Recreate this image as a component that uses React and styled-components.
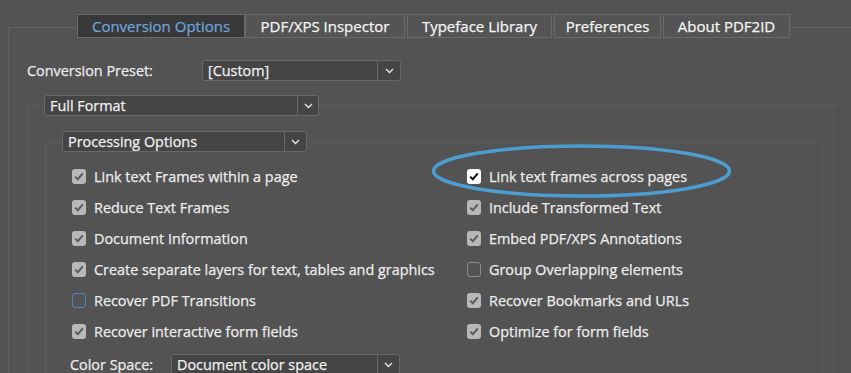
import React from 'react';
import styled, { createGlobalStyle } from 'styled-components';

const Global = createGlobalStyle`
  html, body { margin: 0; padding: 0; background: #535353; overflow: hidden; }
  body { font-family: "Open Sans", "Liberation Sans", sans-serif; color: #ededed; }
  * { box-sizing: border-box; }
`;

const Page = styled.div`
  width: 851px;
  height: 373px;
  padding-top: 27px;
  overflow: hidden;
`;

const Panel = styled.div`
  margin-left: 8px;
  width: 900px;
  min-height: 400px;
  border-top: 1px solid #616161;
  border-left: 1px solid #616161;
  padding-left: 18px;
`;

const TabBar = styled.div`
  display: flex;
  gap: 2px;
  margin-top: -14px;
  margin-left: 50px;
`;

const Tab = styled.div`
  width: ${p => p.$w}px;
  height: 24px;
  margin-right: ${p => (p.$tight ? -2 : 0)}px;
  display: flex;
  align-items: center;
  justify-content: center;
  border: 1px solid #6a6a6a;
  background: ${p => (p.$active ? '#383838' : '#545454')};
  color: ${p => (p.$active ? '#6fa3da' : '#f4f4f4')};
  font-size: 15px;
  -webkit-text-stroke: 0.25px currentColor;
  white-space: nowrap;
`;

const Row = styled.div`
  display: flex;
  align-items: center;
  margin-top: ${p => p.$mt || 0}px;
  margin-left: ${p => p.$ml || 0}px;
`;

const Label = styled.div`
  width: ${p => p.$w}px;
  font-size: 14.4px;
  -webkit-text-stroke: 0.25px currentColor;
  white-space: nowrap;
`;

const SelectBox = styled.div`
  width: ${p => p.$w}px;
  height: 21px;
  display: flex;
  align-items: stretch;
  border: 1px solid #686868;
  border-radius: 3px;
  background: #454545;
  margin-top: ${p => p.$mt || 0}px;
  margin-left: ${p => p.$ml || 0}px;
  font-size: 14.4px;
  -webkit-text-stroke: 0.25px currentColor;
  color: #f0f0f0;
  flex-shrink: 0;
`;

const SelectText = styled.div`
  flex: 1;
  display: flex;
  align-items: center;
  padding-left: 5px;
  white-space: nowrap;
  overflow: hidden;
`;

const SelectArrow = styled.div`
  width: ${p => p.$aw}px;
  border-left: 1px solid #686868;
  display: flex;
  align-items: center;
  justify-content: center;
`;

const Group = styled.div`
  border: 1px solid #5d5d5d;
  border-right-color: #4d4d4d;
  margin-top: ${p => p.$mt}px;
  margin-left: ${p => p.$ml}px;
  width: ${p => p.$w}px;
  min-height: 300px;
`;

const CheckGrid = styled.div`
  display: grid;
  grid-template-columns: 395px 1fr;
  grid-auto-rows: 31px;
  margin-top: 9px;
  margin-left: 26px;
`;

const CheckItem = styled.div`
  position: relative;
  display: flex;
  align-items: center;
  gap: 8px;
  font-size: 14.4px;
  -webkit-text-stroke: 0.25px currentColor;
  white-space: nowrap;
`;

const Box = styled.div`
  width: 14px;
  height: 15px;
  border-radius: 3px;
  flex-shrink: 0;
  display: flex;
  align-items: center;
  justify-content: center;
  background: ${p => (p.$kind === 'hi' ? '#ffffff' : p.$checked ? '#b8b8b8' : 'transparent')};
  border: ${p => (p.$checked ? 'none' : `1px solid ${p.$focus ? '#5282c8' : '#8c8c8c'}`)};
`;

const Ring = styled.svg`
  position: absolute;
  left: -36px;
  top: -17px;
  overflow: visible;
  pointer-events: none;
`;

function Chevron() {
  return (
    <svg width="9" height="6" viewBox="0 0 9 6">
      <path d="M1 1 L4.5 4.5 L8 1" fill="none" stroke="#e6e6e6" strokeWidth="1.4" />
    </svg>
  );
}

function Select({ w, aw, text, mt, ml }) {
  return (
    <SelectBox $w={w} $mt={mt} $ml={ml}>
      <SelectText>{text}</SelectText>
      <SelectArrow $aw={aw}><Chevron /></SelectArrow>
    </SelectBox>
  );
}

function Check({ label, checked = true, kind, focus, ring }) {
  return (
    <CheckItem>
      <Box $checked={checked} $kind={kind} $focus={focus}>
        {checked && (
          <svg width="10" height="9" viewBox="0 0 10 9">
            <path d="M1.2 4.6 L3.8 7.2 L8.8 1.4" fill="none"
              stroke={kind === 'hi' ? '#111' : '#5c5c5c'} strokeWidth="2" />
          </svg>
        )}
      </Box>
      {label}
      {ring && (
        <Ring width="302" height="54" viewBox="0 0 302 54">
          <ellipse cx="150.5" cy="27" rx="148" ry="25" fill="none" stroke="#4c9dd0" strokeWidth="3.6" />
        </Ring>
      )}
    </CheckItem>
  );
}

const tabs = [
  { t: 'Conversion Options', w: 168, active: true, tight: true },
  { t: 'PDF/XPS Inspector', w: 160 },
  { t: 'Typeface Library', w: 145 },
  { t: 'Preferences', w: 107 },
  { t: 'About PDF2ID', w: 127 },
];

export default function App() {
  return (
    <>
      <Global />
      <Page>
        <Panel>
          <TabBar>
            {tabs.map(tb => (
              <Tab key={tb.t} $w={tb.w} $active={tb.active} $tight={tb.tight}>{tb.t}</Tab>
            ))}
          </TabBar>
          <Row $mt={22}>
            <Label $w={175}>Conversion Preset:</Label>
            <Select w={199} aw={23} text="[Custom]" />
          </Row>
          <Group $mt={24} $ml={0} $w={812}>
            <Select w={275} aw={21} text="Full Format" mt={-11} ml={16} />
            <Group $mt={26} $ml={17} $w={773}>
              <Select w={245} aw={22} text="Processing Options" mt={-12} ml={16} />
              <CheckGrid>
                <Check label="Link text Frames within a page" />
                <Check label="Link text frames across pages" kind="hi" ring />
                <Check label="Reduce Text Frames" />
                <Check label="Include Transformed Text" />
                <Check label="Document Information" />
                <Check label="Embed PDF/XPS Annotations" />
                <Check label="Create separate layers for text, tables and graphics" />
                <Check label="Group Overlapping elements" checked={false} />
                <Check label="Recover PDF Transitions" checked={false} focus />
                <Check label="Recover Bookmarks and URLs" />
                <Check label="Recover interactive form fields" />
                <Check label="Optimize for form fields" />
              </CheckGrid>
              <Row $mt={7} $ml={24}>
                <Label $w={101}>Color Space:</Label>
                <Select w={229} aw={22} text="Document color space" />
              </Row>
            </Group>
          </Group>
        </Panel>
      </Page>
    </>
  );
}
